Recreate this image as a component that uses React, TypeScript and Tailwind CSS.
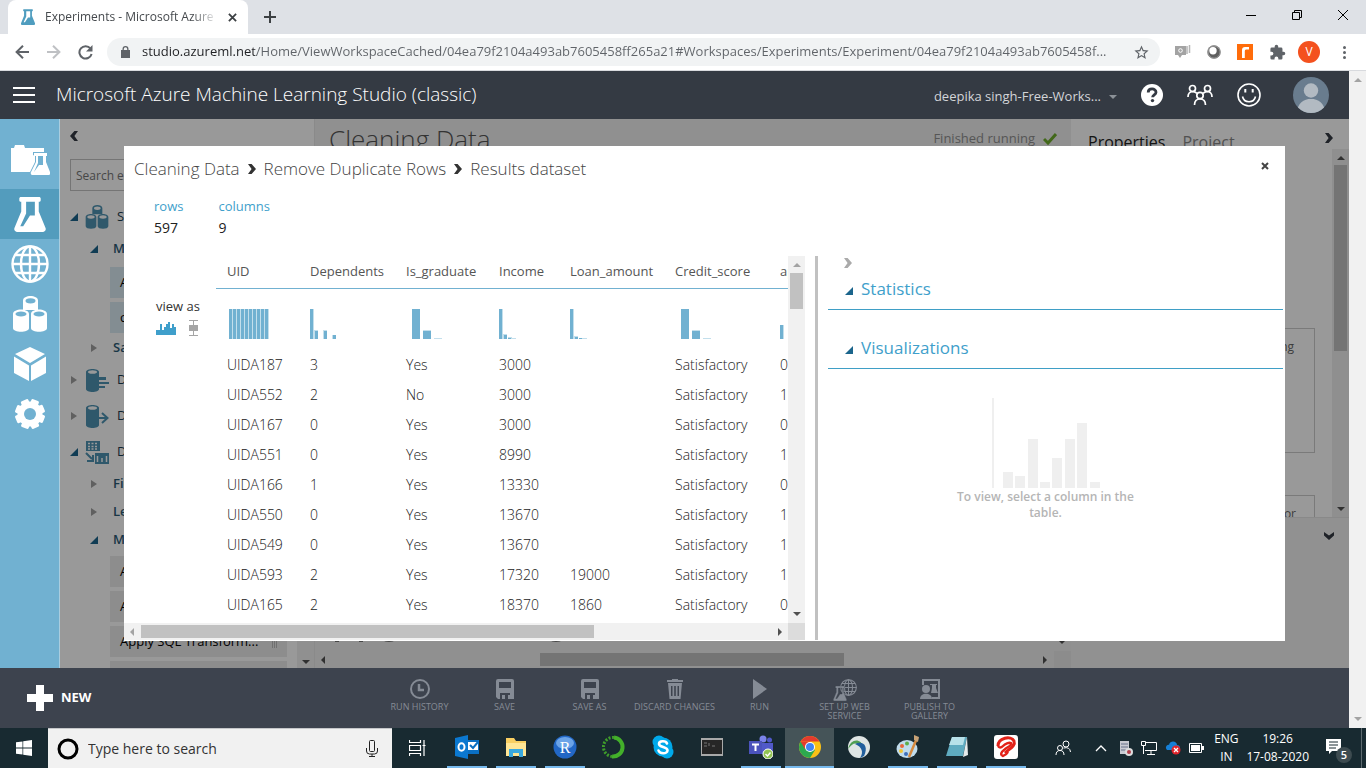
import type { ReactNode } from 'react';
import clsx from 'clsx';

const URL =
  'studio.azureml.net/Home/ViewWorkspaceCached/04ea79f2104a493ab7605458ff265a21#Workspaces/Experiments/Experiment/04ea79f2104a493ab7605458f...';

type Bar = [x: number, width: number, height: number, light?: boolean];

type Column = { name: string; width: string; bars: Bar[] };

const uidBars: Bar[] = Array.from({ length: 10 }, (_, i) => [2 + i * 4, 3, 30]);

const columns: Column[] = [
  { name: 'UID', width: 'w-[83px]', bars: [[2, 40, 30, true], ...uidBars] },
  { name: 'Dependents', width: 'w-24', bars: [[0, 4, 30, true], [0, 3, 30], [4, 4, 9, true], [5, 3, 8], [13, 4, 9, true], [14, 3, 8], [22, 4, 4, true], [23, 3, 4]] },
  { name: 'Is_graduate', width: 'w-[93px]', bars: [[6, 8, 30], [17, 8, 9, true], [17, 8, 8], [28, 8, 1, true]] },
  { name: 'Income', width: 'w-[71px]', bars: [[0, 4, 30, true], [0, 3, 30], [4, 4, 5, true], [5, 3, 4], [9, 4, 2, true], [9, 3, 1], [13, 4, 1, true]] },
  { name: 'Loan_amount', width: 'w-[105px]', bars: [[0, 4, 30, true], [0, 3, 30], [4, 4, 3, true], [5, 3, 2], [9, 3, 1], [12, 5, 1, true]] },
  { name: 'Credit_score', width: 'w-[105px]', bars: [[6, 8, 30], [17, 8, 9, true], [17, 8, 8], [28, 8, 1, true]] },
  { name: 'approval_status', width: 'w-[140px]', bars: [[0, 4, 14, true], [0, 3, 14]] },
];

const rows = [
  ['UIDA187', '3', 'Yes', '3000', '', 'Satisfactory', '0'],
  ['UIDA552', '2', 'No', '3000', '', 'Satisfactory', '1'],
  ['UIDA167', '0', 'Yes', '3000', '', 'Satisfactory', '0'],
  ['UIDA551', '0', 'Yes', '8990', '', 'Satisfactory', '1'],
  ['UIDA166', '1', 'Yes', '13330', '', 'Satisfactory', '0'],
  ['UIDA550', '0', 'Yes', '13670', '', 'Satisfactory', '1'],
  ['UIDA549', '0', 'Yes', '13670', '', 'Satisfactory', '1'],
  ['UIDA593', '2', 'Yes', '17320', '19000', 'Satisfactory', '1'],
  ['UIDA165', '2', 'Yes', '18370', '1860', 'Satisfactory', '0'],
];

/* ---------- small drawings ---------- */

function Arrow({ dir, className }: { dir: 'up' | 'down' | 'left' | 'right'; className?: string }) {
  const shapes = {
    up: '0,6 4,2 8,6',
    down: '0,2 8,2 4,6',
    left: '6,0 6,8 2,4',
    right: '2,0 6,4 2,8',
  };
  return (
    <svg viewBox="0 0 8 8" className={clsx('size-2 shrink-0 fill-current', className)}>
      <polygon points={shapes[dir]} />
    </svg>
  );
}

function Chevron({ className }: { className?: string }) {
  return (
    <svg viewBox="0 0 8 10" className={clsx('h-[10px] w-2 shrink-0 fill-current', className)}>
      <path d="M0 0h3.6L8 5l-4.4 5H0l3.6-5z" />
    </svg>
  );
}

function Flask({ className }: { className?: string }) {
  return (
    <svg viewBox="0 0 32 36" className={clsx('fill-current', className)}>
      <path
        fillRule="evenodd"
        d="M6 0h20a2 2 0 0 1 1 2v1a2 2 0 0 1-1 2h-1v10l7 17a3 3 0 0 1-3 4H3a3 3 0 0 1-3-4l7-17V5H6a2 2 0 0 1-1-2V2a2 2 0 0 1 1-2zM12 5v12L6 30h3l7-11h5V5z"
      />
    </svg>
  );
}

function Globe({ className }: { className?: string }) {
  return (
    <svg viewBox="0 0 38 38" fill="none" stroke="currentColor" strokeWidth="2.4" className={className}>
      <circle cx="19" cy="19" r="17.5" />
      <ellipse cx="19" cy="19" rx="9" ry="17.5" />
      <path d="M19 1v36M1 19h36M4.500 10h29M4.500 28h29" />
    </svg>
  );
}

function Cylinders({ className, hole }: { className?: string; hole: string }) {
  return (
    <svg viewBox="0 0 34 36" className={clsx('fill-current', className)}>
      <path d="M10 4.500c0-6 15-6 15 0V14H10z" />
      <ellipse cx="17.500" cy="4.800" rx="5" ry="2.600" className={hole} />
      <path d="M0 18c0-6 16-6 16 0v14c0 5-16 5-16 0zM18 18c0-6 16-6 16 0v14c0 5-16 5-16 0z" />
      <ellipse cx="8" cy="18" rx="5.500" ry="2.600" className={hole} />
      <ellipse cx="26" cy="18" rx="5.500" ry="2.600" className={hole} />
    </svg>
  );
}

function Gear({ className }: { className?: string }) {
  return (
    <svg viewBox="0 0 30 30" className={clsx('fill-current', className)}>
      {[0, 45, 90, 135].map((a) => (
        <rect key={a} x="11" y="0" width="8" height="30" rx="1.500" transform={`rotate(${a + 22} 15 15)`} />
      ))}
      <circle cx="15" cy="15" r="12.500" />
      <circle cx="15" cy="15" r="6" className="fill-[#71b1d1]" />
    </svg>
  );
}

function Histogram({ bars }: { bars: Bar[] }) {
  return (
    <svg width="56" height="30" shapeRendering="crispEdges">
      {bars.map(([x, w, h, light], i) => (
        <rect key={i} x={x} y={30 - h} width={w} height={h} fill={light ? '#c3dfec' : '#71b1d1'} />
      ))}
    </svg>
  );
}

/* ---------- browser chrome ---------- */

function TabStrip() {
  return (
    <div className="flex h-[34px] shrink-0 items-end bg-[#dee1e6] pl-2">
      <div className="flex h-[34px] w-60 items-center gap-[10px] rounded-t-lg bg-white pr-[11px] pl-[13px]">
        <Flask className="h-4 w-[14px] shrink-0 text-[#4f9dbf]" />
        <span className="flex-1 overflow-hidden mask-r-from-85% text-xs whitespace-nowrap text-[#45494d]">
          Experiments - Microsoft Azure M
        </span>
        <button aria-label="Close tab" className="text-[#3c4043]">
          <svg viewBox="0 0 10 10" className="size-[9px] stroke-current stroke-2">
            <path d="M1 1l8 8M9 1l-8 8" />
          </svg>
        </button>
      </div>
      <button aria-label="New tab" className="ml-4 self-center text-[#3c4043]">
        <svg viewBox="0 0 12 12" className="size-3 stroke-current stroke-2">
          <path d="M6 0v12M0 6h12" />
        </svg>
      </button>
      <div className="mb-[5px] ml-auto flex h-7 items-center text-black">
        <button aria-label="Minimize" className="flex w-[46px] justify-center">
          <svg viewBox="0 0 10 10" className="size-[10px] stroke-current" shapeRendering="crispEdges"><path d="M0 5.500h10" /></svg>
        </button>
        <button aria-label="Restore" className="flex w-[46px] justify-center">
          <svg viewBox="0 0 10 10" fill="none" className="size-[10px] stroke-current"><path d="M.5 2.500h7v7h-7zM2.500 2.500v-2h7v7h-2" /></svg>
        </button>
        <button aria-label="Close" className="flex w-[46px] justify-center">
          <svg viewBox="0 0 10 10" className="size-[10px] stroke-current"><path d="M0 0l10 10M10 0L0 10" /></svg>
        </button>
      </div>
    </div>
  );
}

function Toolbar() {
  return (
    <div className="flex h-[37px] shrink-0 items-center border-b border-[#d8dade] bg-white pr-[14px] pl-[15px] text-[#5f6368]">
      <button aria-label="Back" className="mr-[18px]">
        <svg viewBox="0 0 14 14" fill="none" className="size-[14px] stroke-current stroke-2"><path d="M14 7H2M8 .8L1.600 7 8 13.200" /></svg>
      </button>
      <button aria-label="Forward" className="mr-[17px] text-[#bfc1c4]">
        <svg viewBox="0 0 14 14" fill="none" className="size-[14px] stroke-current stroke-2"><path d="M0 7h12M6 .8L12.400 7 6 13.200" /></svg>
      </button>
      <button aria-label="Reload" className="mr-[14px]">
        <svg viewBox="0 0 15 15" fill="none" className="size-[15px] stroke-current stroke-2">
          <path d="M12.500 3.500A6.200 6.200 0 1 0 13.600 9" />
          <path d="M14.500 0v6.500H8z" className="fill-current stroke-none" />
        </svg>
      </button>
      <div className="flex h-7 min-w-0 flex-1 items-center rounded-full bg-[#f1f3f4] pr-[10px] pl-[14px]">
        <svg viewBox="0 0 9 12" className="mr-3 h-3 w-[9px] shrink-0 fill-current">
          <path d="M1.500 4V3a3 3 0 0 1 6 0v1H9v8H0V4zm1.300 0h3.400V3a1.700 1.700 0 0 0-3.400 0z" />
        </svg>
        <input
          aria-label="Address"
          readOnly
          value={URL}
          className="min-w-0 flex-1 bg-[linear-gradient(to_right,#202124_113px,#5f6368_113px)] bg-clip-text text-[13px] text-transparent outline-none"
        />
        <button aria-label="Bookmark" className="ml-3">
          <svg viewBox="0 0 24 24" className="size-[17px] fill-current">
            <path d="M22 9.240l-7.190-.62L12 2 9.190 8.630 2 9.240l5.460 4.730L5.820 21 12 17.270 18.180 21l-1.630-7.030zM12 15.400l-3.760 2.270 1-4.280-3.320-2.880 4.380-.38L12 6.100l1.710 4.040 4.380.38-3.320 2.880 1 4.280z" />
          </svg>
        </button>
      </div>
      <div className="flex items-center gap-4 pl-[14px]">
        <svg viewBox="0 0 17 14" className="h-[14px] w-[17px]">
          <path d="M1 1h11v9H8l-2 3-2-3H1z" fill="#a3a3a3" />
          <path d="M13 1v8M15.500 0v8" stroke="#b5b5b5" strokeWidth="1.500" />
          <circle cx="6.500" cy="5.500" r="1.800" fill="none" stroke="#fff" />
        </svg>
        <svg viewBox="0 0 14 14" className="size-[14px]">
          <circle cx="7" cy="7" r="6.700" fill="#7c7c7c" />
          <circle cx="7.500" cy="7.500" r="5.500" fill="#5f5f5f" />
          <circle cx="6" cy="5.800" r="3.700" fill="#fff" />
          <circle cx="7" cy="7" r="6.200" fill="none" stroke="#9a9a9a" />
        </svg>
        <svg viewBox="0 0 16 16" className="size-4">
          <path d="M0 0h16v16H0z" fill="#ff6c0a" />
          <path d="M5 14V6q0-3 3-3h4v2.500H9Q7.800 5.500 7.800 7v7z" fill="#fff" />
        </svg>
        <svg viewBox="0 0 24 24" className="size-[17px] fill-current">
          <path d="M20.500 11H19V7a2 2 0 0 0-2-2h-4V3.500a2.500 2.500 0 0 0-5 0V5H4a2 2 0 0 0-2 2v3.800h1.500a2.700 2.700 0 0 1 0 5.400H2V20a2 2 0 0 0 2 2h3.800v-1.500a2.700 2.700 0 0 1 5.400 0V22H17a2 2 0 0 0 2-2v-4h1.500a2.500 2.500 0 0 0 0-5z" />
        </svg>
        <button className="-ml-1 size-[22px] rounded-full bg-[#f4511e] text-xs leading-[22px] text-white">V</button>
        <button aria-label="Menu" className="flex w-4 flex-col items-center gap-[2px]">
          <i className="size-[3px] rounded-full bg-current" />
          <i className="size-[3px] rounded-full bg-current" />
          <i className="size-[3px] rounded-full bg-current" />
        </button>
      </div>
    </div>
  );
}

/* ---------- studio ---------- */

function Header() {
  return (
    <header className="flex h-12 shrink-0 items-center bg-[#343a43] pr-5 pl-[13px] text-white">
      <button aria-label="Menu" className="mr-[21px] flex w-[22px] flex-col gap-[5px]">
        <i className="h-[2px] w-full bg-white" />
        <i className="h-[2px] w-full bg-white" />
        <i className="h-[2px] w-full bg-white" />
      </button>
      <h1 className="pb-[2px] text-[19px] leading-6 font-light">Microsoft Azure Machine Learning Studio (classic)</h1>
      <button className="mr-6 ml-auto flex items-center gap-2 pt-1 text-[13px] text-[#d3d5d8]">
        deepika singh-Free-Works...
        <Arrow dir="down" className="text-[#8c9198]" />
      </button>
      <div className="flex items-center gap-6">
        <svg viewBox="0 0 22 22" className="size-[22px]">
          <circle cx="11" cy="11" r="11" fill="#fff" />
          <path d="M7.200 8.500C7.200 3.700 15 3.900 15 8.200c0 2.600-3.400 2.700-3.400 5" fill="none" stroke="#343a43" strokeWidth="2.800" />
          <circle cx="11.500" cy="16.600" r="1.700" fill="#343a43" />
        </svg>
        <svg viewBox="0 0 26 22" fill="none" stroke="#fff" strokeWidth="1.700" className="h-[22px] w-[26px]">
          <circle cx="5.500" cy="4.500" r="3" />
          <circle cx="20.500" cy="4.500" r="3" />
          <circle cx="13" cy="11.500" r="3.200" />
          <path d="M1 13q0-5 4.500-5.500Q9 8 10 9.500M25 13q0-5-4.500-5.500Q17 8 16 9.500M7.500 21q0-6 5.500-6t5.500 6" />
        </svg>
        <svg viewBox="0 0 24 24" fill="none" stroke="#fff" strokeWidth="1.600" className="size-6">
          <circle cx="12" cy="12" r="11" />
          <path d="M5.500 13.500c1.500 7 11.500 7 13 0" />
          <path d="M8.300 6v3.500M15.700 6v3.500" strokeWidth="2" />
        </svg>
        <svg viewBox="0 0 36 36" className="ml-2 size-9">
          <defs>
            <clipPath id="face"><circle cx="18" cy="18" r="18" /></clipPath>
          </defs>
          <g clipPath="url(#face)">
            <path d="M0 0h36v36H0z" fill="#697c8e" />
            <path d="M4 36c0-19 28-19 28 0z" fill="#b2bac2" />
            <circle cx="18" cy="13.500" r="8.500" fill="#697c8e" />
            <circle cx="18" cy="13.500" r="7.200" fill="#b2bac2" />
          </g>
        </svg>
      </div>
    </header>
  );
}

function NavItem({ label, active, children }: { label: string; active?: boolean; children: ReactNode }) {
  return (
    <button
      aria-label={label}
      className={clsx('flex h-[50px] w-full items-center justify-center', active && 'bg-[#539cbd]')}
    >
      {children}
    </button>
  );
}

function SideNav() {
  return (
    <nav className="w-[60px] shrink-0 border-r border-[#a9cddf] bg-[#71b1d1] pt-5 text-white">
      <NavItem label="Projects">
        <svg viewBox="0 0 40 40" className="mb-1 size-10 fill-current">
          <path d="M1 6h3l1-3h9l1 3h19v4H23v3l2 1v6l-5 10H1z" />
          <path d="M24 11h13v3h-1v6l4 10a2 2 0 0 1-2 3H23a2 2 0 0 1-2-3l5-10v-6h-2zm4 3v7l-4 9 5-7h4v-9z" fillRule="evenodd" />
        </svg>
      </NavItem>
      <NavItem label="Experiments" active><Flask className="h-[35px] w-8" /></NavItem>
      <NavItem label="Web services"><Globe className="size-[38px]" /></NavItem>
      <NavItem label="Datasets"><Cylinders className="h-9 w-[34px]" hole="fill-[#71b1d1]" /></NavItem>
      <NavItem label="Trained models">
        <svg viewBox="0 0 32 34" className="h-[34px] w-8 fill-current">
          <path d="M16 0l15 7-15 9L1 7zM0 9.500l15 9V34L0 26zM32 9.500l-15 9V34l15-8z" />
        </svg>
      </NavItem>
      <NavItem label="Settings"><Gear className="size-[30px]" /></NavItem>
    </nav>
  );
}

function TreeArrow({ open, className }: { open?: boolean; className?: string }) {
  return (
    <svg viewBox="0 0 8 8" className={clsx('size-2 shrink-0', open ? 'fill-[#1b658c]' : 'fill-[#a0a0a0]', className)}>
      {open ? <path d="M8 0v8H0z" /> : <path d="M1 0l6 4-6 4z" />}
    </svg>
  );
}

function TreeRow({ label, open, icon }: { label: string; open?: boolean; icon: ReactNode }) {
  return (
    <div className="flex h-9 items-center gap-[7px] pl-[10px] whitespace-nowrap">
      <TreeArrow open={open} />
      <span className="flex size-6 shrink-0 items-center justify-center text-[#4f93b3]">{icon}</span>
      <span className="ml-[1px] text-[13px] text-[#1c3c50]">{label}</span>
    </div>
  );
}

function TreeSub({ label, open }: { label: string; open?: boolean }) {
  return (
    <div className="flex h-7 items-center gap-[15px] pl-[30px] text-[13px] font-semibold whitespace-nowrap text-[#2c5a75]">
      <TreeArrow open={open} />
      {label}
    </div>
  );
}

function TreeItem({ label, blue }: { label: string; blue?: boolean }) {
  return (
    <div
      className={clsx(
        'mb-1 ml-[50px] flex h-[31px] items-center justify-between pr-[10px] pl-[10px] text-[13px] text-black',
        blue ? 'bg-[#dbecf4]' : 'bg-[#ececec]'
      )}
    >
      {label}
      <span className="flex gap-[1px]">
        <i className="h-3 w-px bg-[#bbb]" />
        <i className="h-3 w-px bg-[#bbb]" />
        <i className="h-3 w-px bg-[#bbb]" />
      </span>
    </div>
  );
}

function ModulePanel() {
  return (
    <aside className="flex w-[254px] shrink-0 overflow-hidden bg-white">
      <div className="min-w-0 flex-1 pr-[10px]">
        <div className="flex h-[34px] items-center pl-[10px] text-[#343a43]">
          <Chevron className="rotate-180" />
        </div>
        <div className="mt-[6px] ml-[10px]">
          <input
            aria-label="Search experiment items"
            placeholder="Search experiment items"
            className="h-8 w-full border border-[#c4c4c4] px-[5px] text-xs placeholder:text-[#777]"
          />
        </div>
        <div className="mt-2">
          <TreeRow label="Saved" open icon={<Cylinders className="size-6" hole="fill-white" />} />
          <TreeSub label="My" open />
          <div className="mt-[4px] -mb-[3px]">
            <TreeItem label="A" blue />
            <TreeItem label="c" blue />
          </div>
          <TreeSub label="Samples" />
          <TreeRow
            label="Data"
            icon={
              <svg viewBox="0 0 24 24" className="size-6 fill-current">
                <path d="M1 4c0-4 13-4 13 0v17c0 4-13 4-13 0z" />
                <ellipse cx="7.500" cy="4" rx="4.500" ry="1.800" className="fill-white" />
                <path d="M12 9h9v3h-9zM12 14h12v2H12zM12 18h8v2h-8z" />
              </svg>
            }
          />
          <TreeRow
            label="Data"
            icon={
              <svg viewBox="0 0 24 24" className="size-6 fill-current">
                <path d="M1 4c0-4 13-4 13 0v17c0 4-13 4-13 0z" />
                <ellipse cx="7.500" cy="4" rx="4.500" ry="1.800" className="fill-white" />
                <path d="M11 14h11M17 9l5.500 5-5.500 5" fill="none" className="stroke-current stroke-2" />
              </svg>
            }
          />
          <TreeRow
            label="Data"
            open
            icon={
              <svg viewBox="0 0 24 24" className="size-6 fill-current">
                <path d="M1 1h14v10H1zM10 13h14v11H10z" />
                <path d="M3 3.500h10M3 6.500h10M3 9h10" stroke="#fff" strokeWidth="1.500" strokeDasharray="2 1.500" />
                <path d="M12.500 16v6M17 18v4M21.500 16v6" stroke="#fff" strokeWidth="1.500" />
                <path d="M1 13l6 6M8 15v6H2" fill="none" className="stroke-current stroke-2" />
              </svg>
            }
          />
          <TreeSub label="Filter" />
          <TreeSub label="Learning" />
          <TreeSub label="Manipulation" open />
          <div className="mt-[2px]">
            <TreeItem label="Add Columns" />
            <TreeItem label="Add Rows" />
            <TreeItem label="Apply SQL Transform..." />
            <TreeItem label="" />
          </div>
        </div>
      </div>
      <div className="mt-20 flex w-[17px] flex-col items-center justify-end bg-[#f0f0f0] pb-[2px]">
        <Arrow dir="down" className="text-[#505050]" />
      </div>
    </aside>
  );
}

function Canvas() {
  return (
    <section className="flex min-w-0 flex-1 flex-col border-l border-[#e6e6e6] bg-[#f1f1f1]">
      <div className="flex h-10 items-center justify-between pr-[14px] pl-[14px]">
        <h2 className="text-[26px] font-light text-[#555]">Cleaning Data</h2>
        <span className="flex items-center gap-2 text-[13px] text-[#8f8f8f]">
          Finished running
          <svg viewBox="0 0 14 12" fill="none" className="h-3 w-[14px] stroke-[#6fae2c] stroke-3"><path d="M1 6l4 4 8-9" /></svg>
        </span>
      </div>
      <div className="flex flex-1 flex-col justify-end">
        <div className="flex items-end">
          {/* zoom controls peeking out from under the dialog */}
          <svg viewBox="0 0 260 6" className="h-[6px] w-[260px] fill-[#777]">
            <circle cx="74" cy="-11" r="13" />
            <circle cx="241" cy="-11" r="13" />
            <path d="M20 0h4v2h-4zM44 0h4v2h-4z" />
          </svg>
          <Arrow dir="down" className="mr-[5px] ml-auto text-[#505050]" />
        </div>
        <div className="mt-[5px] flex h-[17px] items-center">
          <Arrow dir="left" className="ml-1 text-[#505050]" />
          <div className="ml-[213px] h-[13px] w-[304px] bg-[#c1c1c1]" />
          <Arrow dir="right" className="mr-[5px] ml-auto text-[#505050]" />
          <div className="h-full w-[17px] bg-[#eaeaea]" />
        </div>
      </div>
    </section>
  );
}

function Properties() {
  return (
    <aside className="flex w-[278px] shrink-0 flex-col bg-white">
      <div className="flex h-[45px] shrink-0 items-center gap-[17px] pr-4 pl-[17px] text-base whitespace-nowrap">
        <span className="text-[#222]">Properties</span>
        <span className="text-[#888]">Project</span>
        <Chevron className="mb-2 ml-auto text-[#343a43]" />
      </div>
      <div className="-mt-[15px] flex h-[368px] shrink-0 overflow-hidden">
        <div className="flex min-w-0 flex-1 flex-col">
          <div className="mt-[179px] mr-[17px] ml-4 h-[125px] shrink-0 border border-[#ccc] pt-[10px] pr-5 text-right text-xs text-[#666]">
            ng
          </div>
          <div className="mt-[42px] mr-[17px] ml-4 h-20 shrink-0 border border-[#ccc] pt-[10px] pr-[18px] text-right text-xs leading-4 text-[#666]">
            or
          </div>
        </div>
        <div className="flex w-[17px] flex-col items-center bg-[#eee] pt-[5px] pb-1 text-[#505050]">
          <Arrow dir="up" />
          <div className="mt-[3px] h-[186px] w-[13px] bg-[#c1c1c1]" />
          <Arrow dir="down" className="mt-auto" />
        </div>
      </div>
      <div className="flex flex-1 justify-end border-t border-[#e5e5e5] bg-[#f2f2f2] pt-[13px] pr-4">
        <Chevron className="rotate-90 text-[#343a43]" />
      </div>
    </aside>
  );
}

/* ---------- results dialog ---------- */

function DataTable() {
  return (
    <div className="flex w-[681px] shrink-0 flex-col">
      <div className="flex min-h-0 flex-1">
        <div className="flex min-w-0 flex-1 overflow-hidden">
          <div className="w-[92px] shrink-0 pt-10 pl-8">
            <div className="text-[13px] leading-5 text-[#333]">view as</div>
            <div className="mt-1 flex items-center gap-[13px]">
              <button aria-label="Histogram">
                <svg viewBox="0 0 20 16" className="h-4 w-5 fill-[#3f9fcb]" shapeRendering="crispEdges">
                  <path d="M0 10h4V4h2v6h2V7h2V4h2V2h2v6h2V4h2v3h2v8H0z" />
                </svg>
              </button>
              <button aria-label="Box plot">
                <svg viewBox="0 0 9 16" className="h-4 w-[9px] fill-[#a5a5a5]" shapeRendering="crispEdges">
                  <path d="M0 0h9v1H5v4h4v6H5v4h4v1H0v-1h4v-4H0V5h4V1H0z" />
                </svg>
              </button>
            </div>
          </div>
          <table className="w-[693px] shrink-0 table-fixed self-start text-left font-light">
            <thead>
              <tr className="h-8 border-b border-[#71b1d1]">
                {columns.map((c) => (
                  <th key={c.name} className={clsx('pl-[11px] text-[13px] font-normal text-[#555]', c.width)}>
                    {c.name}
                  </th>
                ))}
              </tr>
            </thead>
            <tbody className="text-sm text-[#222]">
              <tr className="h-[62px]">
                {columns.map((c) => (
                  <td key={c.name} className="pt-[10px] pl-[11px]">
                    <Histogram bars={c.bars} />
                  </td>
                ))}
              </tr>
              {rows.map((row) => (
                <tr key={row[0]} className="h-[30px]">
                  {row.map((cell, i) => (
                    <td key={i} className="pl-[11px]">{cell}</td>
                  ))}
                </tr>
              ))}
            </tbody>
          </table>
        </div>
        <div className="flex w-[17px] shrink-0 flex-col items-center bg-[#f1f1f1] pt-[5px] pb-[5px]">
          <Arrow dir="up" className="text-[#a3a3a3]" />
          <div className="mt-1 h-9 w-[13px] bg-[#c1c1c1]" />
          <Arrow dir="down" className="mt-auto text-[#505050]" />
        </div>
      </div>
      <div className="flex h-[17px] shrink-0 items-center bg-[#f1f1f1]">
        <Arrow dir="left" className="ml-1 text-[#a3a3a3]" />
        <div className="ml-[5px] h-[13px] w-[453px] bg-[#c1c1c1]" />
        <Arrow dir="right" className="mr-1 ml-auto text-[#505050]" />
        <div className="h-full w-[17px] bg-[#dcdcdc]" />
      </div>
    </div>
  );
}

function PanelTitle({ children }: { children: ReactNode }) {
  return (
    <button className="flex h-10 w-full items-center gap-2 border-b border-[#3f9fc6] pb-[2px] pl-[17px] text-[17px] text-[#3f9fcb]">
      <TreeArrow open className="mt-1" />
      {children}
    </button>
  );
}

function SidePanel() {
  const bars = [
    [11, 16], [23, 12], [36, 49], [48, 6], [60, 30], [73, 49], [85, 65], [98, 6],
  ];
  return (
    <div className="mr-[2px] ml-[10px] min-w-0 flex-1">
      <button aria-label="Collapse" className="flex h-[14px] w-full items-center pl-4 text-[#aaa]"><Chevron /></button>
      <PanelTitle>Statistics</PanelTitle>
      <div className="h-[19px]" />
      <PanelTitle>Visualizations</PanelTitle>
      <div className="mt-[29px] flex flex-col items-center pr-5">
        <svg viewBox="0 0 108 90" className="h-[90px] w-[108px] fill-[#efefef]">
          <rect width="2" height="90" />
          {bars.map(([x, h]) => (
            <rect key={x} x={x} y={90 - h} width="10" height={h} />
          ))}
        </svg>
        <p className="w-[200px] pt-px text-center text-xs leading-4 font-semibold text-[#b5b5b5]">
          To view, select a column in the table.
        </p>
      </div>
    </div>
  );
}

function ResultsDialog() {
  return (
    <div role="dialog" aria-label="Results dataset" className="absolute inset-x-16 inset-y-[27px] flex flex-col bg-white">
      <div className="flex h-[46px] shrink-0 items-center gap-2 pr-4 pl-[10px] text-[17px] font-light text-[#444]">
        <span>Cleaning Data</span>
        <Chevron className="text-[#333]" />
        <span>Remove Duplicate Rows</span>
        <Chevron className="text-[#333]" />
        <span>Results dataset</span>
        <button aria-label="Close dialog" className="mb-[6px] ml-auto">
          <svg viewBox="0 0 8 8" className="size-2 stroke-[#444] stroke-2"><path d="M1 1l6 6M7 1L1 7" /></svg>
        </button>
      </div>
      <dl className="flex h-16 shrink-0 gap-[35px] pt-1 pl-[30px]">
        <div>
          <dt className="text-[13px] leading-5 text-[#3f9fcb]">rows</dt>
          <dd className="text-sm leading-6 text-[#222]">597</dd>
        </div>
        <div>
          <dt className="text-[13px] leading-5 text-[#3f9fcb]">columns</dt>
          <dd className="text-sm leading-6 text-[#222]">9</dd>
        </div>
      </dl>
      <div className="flex min-h-0 flex-1 pb-px">
        <DataTable />
        <div className="ml-[10px] w-[3px] shrink-0 bg-[#c1c1c1]" />
        <SidePanel />
      </div>
    </div>
  );
}

/* ---------- bottom command bar ---------- */

function Floppy() {
  return (
    <svg viewBox="0 0 18 20" className="h-5 w-[18px] fill-current">
      <path fillRule="evenodd" d="M2 0h14a2 2 0 0 1 2 2v18h-4v-6H4v6H2l-2-2V2a2 2 0 0 1 2-2zm1 3v6h12V3zM6 16h3v4H6zm6 0h2v4h-2z" />
    </svg>
  );
}

function Command({ label, children }: { label: string; children: ReactNode }) {
  return (
    <button className="flex w-[85px] flex-col items-center gap-[2px] text-[9px] leading-[9px] text-[#858b95]">
      <span className="flex h-[22px] items-center">{children}</span>
      <span className="whitespace-pre">{label}</span>
    </button>
  );
}

function CommandBar() {
  return (
    <footer className="flex h-[60px] shrink-0 bg-[#3d434e]">
      <button className="flex w-[377px] items-center gap-2 pl-[27px] text-[13px] font-bold text-white">
        <svg viewBox="0 0 26 26" className="size-[26px] fill-current"><path d="M9 0h8v9h9v8h-9v9H9v-9H0V9h9z" /></svg>
        NEW
      </button>
      <div className="flex items-start pt-[10px] whitespace-nowrap">
        <Command label="RUN HISTORY">
          <svg viewBox="0 0 20 20" fill="none" className="size-5 stroke-current stroke-2"><circle cx="10" cy="10" r="9" /><path d="M9 5v6h5" strokeWidth="2.500" /></svg>
        </Command>
        <Command label="SAVE"><Floppy /></Command>
        <Command label="SAVE AS"><Floppy /></Command>
        <Command label="DISCARD CHANGES">
          <svg viewBox="0 0 16 20" fillRule="evenodd" className="h-5 w-4 fill-current"><path d="M5 0h6v1h5v2H0V1h5zM1 4h14l-1.500 16h-11zm3 3v10h1.500V7zm3.200 0v10h1.600V7zm3.300 0v10H12V7z" /></svg>
        </Command>
        <Command label="RUN">
          <svg viewBox="0 0 14 20" className="h-5 w-[14px] fill-current"><path d="M0 0l14 10L0 20z" /></svg>
        </Command>
        <Command label={'SET UP WEB\nSERVICE'}>
          <span className="relative mt-[2px] h-[22px] w-6">
            <Globe className="absolute top-0 right-0 size-[17px]" />
            <Flask className="absolute bottom-0 left-0 h-[15px] w-[14px] stroke-[#3d434e] stroke-1" />
          </span>
        </Command>
        <Command label={'PUBLISH TO\nGALLERY'}>
          <svg viewBox="0 0 20 20" className="size-5 fill-current">
            <path d="M2 0h18v20h-8v-2h6V2H4v4H2zM10 5h7v1h-1v3l2 5h-7l1-5V6h-2z" />
            <circle cx="6" cy="10" r="4" />
            <path d="M0 20c0-7 12-7 12 0z" />
          </svg>
        </Command>
      </div>
    </footer>
  );
}

/* ---------- windows taskbar ---------- */

function TaskApp({ label, open, active, children }: { label: string; open?: boolean; active?: boolean; children: ReactNode }) {
  return (
    <button aria-label={label} className={clsx('flex h-full w-[49px] flex-col items-center justify-between', active && 'bg-[#455458]')}>
      <span className="flex h-[38px] items-center">
        <svg viewBox="0 0 24 24" className="size-6">{children}</svg>
      </span>
      <i className={clsx('h-[2px]', active ? 'w-full' : 'w-10', (open || active) && 'bg-[#76b9ed]')} />
    </button>
  );
}

function Taskbar() {
  return (
    <div className="flex h-10 shrink-0 items-center bg-[#182a31] text-white">
      <button aria-label="Start" className="flex w-12 justify-center">
        <svg viewBox="0 0 16 16" className="size-4 fill-current"><path d="M0 2.300L6.500 1.400v6.200H0zM7.200 1.300L16 0v7.600H7.200zM0 8.400h6.500v6.200L0 13.700zM7.200 8.400H16V16l-8.800-1.300z" /></svg>
      </button>
      <div className="flex h-full w-[344px] items-center border-t border-[#c5c7c9] bg-[#f1f1f1] pr-[14px] pl-[9px]">
        <svg viewBox="0 0 22 22" fill="none" className="mr-[9px] size-[22px] shrink-0 stroke-black stroke-3"><circle cx="11" cy="11" r="9" /></svg>
        <input
          aria-label="Type here to search"
          placeholder="Type here to search"
          className="min-w-0 flex-1 text-sm placeholder:text-[#333]"
        />
        <svg viewBox="0 0 12 17" fill="none" className="h-[17px] w-3 stroke-[#222]"><rect x="3.500" y=".5" width="5" height="11" rx="1" /><path d="M.5 8v3q0 3 3 3h5q3 0 3-3V8M6 14v2.500M3 16.500h6" /></svg>
      </div>
      <button aria-label="Task view" className="flex w-[50px] justify-center">
        <svg viewBox="0 0 17 16" fill="none" className="h-4 w-[17px] stroke-white"><path d="M.5 0v2.500h11V0M.5 5.500h11v5H.5zM.5 16v-2.500h11V16M15 0v16M13.500 5.500h3" strokeWidth="1.200" /></svg>
      </button>
      <TaskApp label="Outlook" open>
        <path d="M12 5h12v14H12z" fill="#0a6fc2" />
        <path d="M13 7h10v8H13z" fill="#fff" />
        <path d="M15 10l3 3 5-6" fill="none" stroke="#0a6fc2" strokeWidth="2" />
        <path d="M0 3l13-3v24L0 21z" fill="#0b78d0" />
        <ellipse cx="6.500" cy="12" rx="3" ry="3.800" fill="none" stroke="#fff" strokeWidth="2" />
      </TaskApp>
      <TaskApp label="File Explorer" open>
        <path d="M2 3h8l2 3h10v15H2z" fill="#f8cf62" />
        <path d="M2 8h20v13H2z" fill="#ffe695" />
        <path d="M5 22v-8h14v8h-4v-4H9v4z" fill="#3aa9de" />
      </TaskApp>
      <TaskApp label="RStudio" open>
        <circle cx="12" cy="12" r="11.500" fill="#2267c5" />
        <ellipse cx="12" cy="8" rx="9" ry="6" fill="#6ba4e8" />
        <text x="12" y="18" textAnchor="middle" fontSize="16" fontFamily="Liberation Serif, serif" fill="#fff">R</text>
      </TaskApp>
      <TaskApp label="Anaconda">
        <path d="M12 2.500a9.500 9.500 0 1 1-2 19" fill="none" stroke="#43b02a" strokeWidth="4" />
        <path d="M12 2.500a9.500 9.500 0 0 0-2 19" fill="none" stroke="#3f9d2b" strokeWidth="3" strokeDasharray="2 1.500" />
      </TaskApp>
      <TaskApp label="Skype">
        <circle cx="12" cy="12" r="9.500" fill="#00a9ea" />
        <circle cx="8" cy="7" r="6.500" fill="#00a9ea" />
        <circle cx="16" cy="17" r="6.500" fill="#00a9ea" />
        <path d="M16 8.500c-1-3-8-3-8 .5s8.500 2.500 8.500 6.300c0 4-8 3.700-9 .2" fill="none" stroke="#fff" strokeWidth="2.600" strokeLinecap="round" />
      </TaskApp>
      <TaskApp label="Command Prompt">
        <path d="M1 3h22v18H1z" fill="#a9a9a9" />
        <path d="M2 5h20v14H2z" fill="#262626" />
        <path d="M4 8h3M4 11h3M9 8v3M12 11h3" stroke="#777" />
      </TaskApp>
      <TaskApp label="Teams" open>
        <circle cx="14" cy="4" r="3.500" fill="#7b83eb" />
        <circle cx="20.500" cy="5" r="2.500" fill="#5059c9" />
        <path d="M12 8h12v8q-2 4-6 4-5 0-6-3z" fill="#5059c9" />
        <path d="M0 6h13v13H0z" fill="#4b53bc" />
        <path d="M3 9.500h7M6.500 9.500V16" stroke="#fff" strokeWidth="2" />
        <circle cx="19" cy="19" r="5" fill="#92c353" stroke="#fff" />
        <path d="M16.500 19l2 2 3-3.500" fill="none" stroke="#fff" strokeWidth="1.400" />
      </TaskApp>
      <TaskApp label="Chrome" active>
        <circle cx="12" cy="12" r="11" fill="#fbc116" />
        <path d="M12 12L2.500 6.500A11 11 0 0 0 12 23z" fill="#2da94f" />
        <path d="M12 12v11l5-8z" fill="#2da94f" />
        <path d="M2.500 6.500A11 11 0 0 1 21.500 6.500H12z" fill="#e33b2e" />
        <path d="M2.500 6.500L7 14l5-7.500z" fill="#e33b2e" />
        <circle cx="12" cy="12" r="5" fill="#fff" />
        <circle cx="12" cy="12" r="4" fill="#4285f4" />
      </TaskApp>
      <TaskApp label="WebEx">
        <circle cx="12" cy="12" r="11" fill="#dfe5e4" />
        <path d="M1 14C4 3 14 3 17 13l-5-3C8 7 5 9 1 14z" fill="#4f9e51" />
        <path d="M8 9c8-4 14 2 9 12l-4 2c4-6 2-11-5-14z" fill="#225f9d" />
      </TaskApp>
      <TaskApp label="Paint" open>
        <ellipse cx="11" cy="14" rx="10.500" ry="9" fill="#c0dcec" />
        <circle cx="6" cy="11" r="2" fill="#e8663b" />
        <circle cx="11" cy="8.500" r="2" fill="#5cae4a" />
        <circle cx="5" cy="16" r="2" fill="#efc436" />
        <circle cx="10" cy="19" r="2" fill="#3b6fbd" />
        <path d="M21 3l-8 19" stroke="#d58a3f" strokeWidth="2.500" />
        <path d="M18 0l5 2-1 5-4-2z" fill="#c7a276" />
      </TaskApp>
      <TaskApp label="Notepad" open>
        <path d="M7 2h15l-4 19H1z" fill="#5fabc0" />
        <path d="M7 2h13l-2 8H4z" fill="#b7e1e9" />
        <path d="M22 2l1 18-5 2z" fill="#e7ecec" />
      </TaskApp>
      <TaskApp label="Airtel" open>
        <rect width="24" height="24" rx="3" fill="#fff" />
        <path d="M4 11C4 3 17 0 20 6c2 5-5 8-9 12" fill="none" stroke="#e2231a" strokeWidth="3" />
        <path d="M4 11c1 2 3 2 5 0s6-4 8-3c1 3-4 4-7 7-3 2-4 5-1 6 2-1 4-2 5-4" fill="none" stroke="#e2231a" strokeWidth="2.400" />
      </TaskApp>

      <div className="ml-auto flex h-full items-center text-xs">
        <svg viewBox="0 0 16 16" fill="none" className="mr-6 size-4 stroke-white"><circle cx="11" cy="4" r="3" /><circle cx="5" cy="8" r="2.500" /><path d="M1 15q0-4.500 4-4.500t4 4.500M8.500 8Q15 6.500 15.500 12" /></svg>
        <svg viewBox="0 0 12 7" fill="none" className="mr-3 h-[7px] w-3 stroke-white"><path d="M1 6l5-5 5 5" strokeWidth="1.300" /></svg>
        <svg viewBox="0 0 14 16" className="mr-2 h-4 w-[14px]"><path d="M1 1h9v13H1z" fill="#c9cbd3" /><path d="M2 4h7M2 7h7M2 10h5" stroke="#68738c" /><circle cx="10" cy="12" r="4" fill="#ddd" /><circle cx="10" cy="12" r="2" fill="#b33f4c" /></svg>
        <svg viewBox="0 0 16 14" fill="none" className="mr-2 h-[14px] w-4 stroke-white"><path d="M5 1.500h10.500v8H4M10 10v3.500M6 13.500h8M.5.5h4v4h-4zM2.500 5v8" /></svg>
        <svg viewBox="0 0 16 14" className="mr-2 h-[14px] w-4"><path d="M2 9C-1 6 3 3 4 4c1-5 8-4 8 0 3 0 4 3 2 5z" fill="#1580d8" /><circle cx="11" cy="9" r="4.500" fill="#e0242b" /><path d="M9 7l4 4M13 7l-4 4" stroke="#fff" strokeWidth="1.300" /></svg>
        <svg viewBox="0 0 15 10" className="mr-2 h-[10px] w-[15px]"><path d="M.5.5h12v9H.5z" fill="none" stroke="#fff" /><path d="M2 2h9v6H2zM13 3h2v4h-2z" fill="#fff" /></svg>
        <div className="mr-[6px] w-7 text-center leading-[18px]">ENG<br />IN</div>
        <div className="mr-4 text-center leading-[18px] whitespace-nowrap">19:26<br />17-08-2020</div>
        <button aria-label="Notifications" className="relative mr-3 size-6">
          <svg viewBox="0 0 24 24" className="size-6">
            <path d="M1 3h15v12H7l-3 3v-3H1z" fill="#fff" />
            <path d="M4 6h9M4 9h9M4 12h7" stroke="#182a31" />
          </svg>
          <span className="absolute -right-[3px] -bottom-[3px] size-4 rounded-full bg-[#3d4b50] text-center text-[11px] leading-4 font-semibold">5</span>
        </button>
        <i className="mr-1 h-full w-px bg-[#5d6a6f]" />
      </div>
    </div>
  );
}

export default function App() {
  return (
    <div className="flex h-screen w-full flex-col overflow-hidden bg-white font-['Open_Sans','Noto_Sans',sans-serif]">
      <TabStrip />
      <Toolbar />
      <div className="flex min-h-0 flex-1">
        <div className="flex min-w-0 flex-1 flex-col">
          <Header />
          <main className="flex min-h-0 flex-1">
            <SideNav />
            <div className="relative flex min-w-0 flex-1 overflow-hidden">
              <ModulePanel />
              <Canvas />
              <Properties />
              <div className="absolute inset-0 bg-black/40" />
              <ResultsDialog />
            </div>
          </main>
          <CommandBar />
        </div>
        <div className="flex w-[17px] shrink-0 flex-col items-center justify-between bg-[#f1f1f1] py-[5px] text-[#a3a3a3]">
          <Arrow dir="up" />
          <Arrow dir="down" />
        </div>
      </div>
      <Taskbar />
    </div>
  );
}
